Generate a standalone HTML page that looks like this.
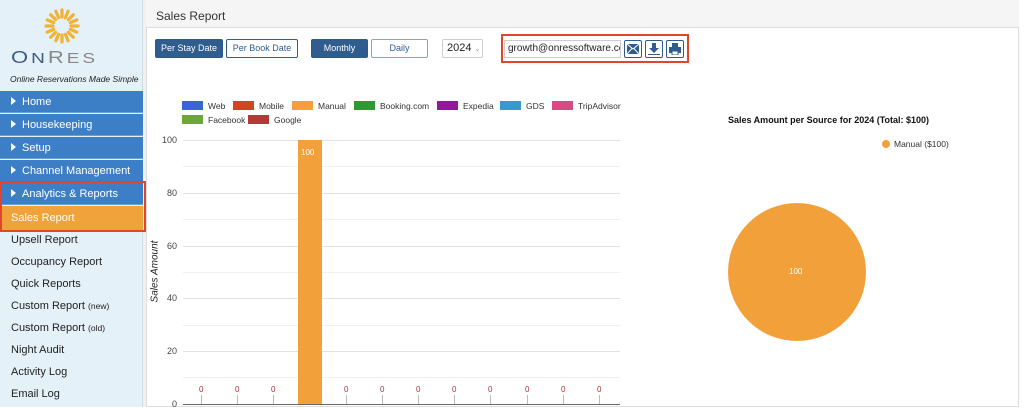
<!DOCTYPE html>
<html><head><meta charset="utf-8"><style>
*{box-sizing:border-box;margin:0;padding:0}
body{width:1024px;height:407px;overflow:hidden;background:#fff;font-family:"Liberation Sans",Arial,sans-serif;position:relative}
.sb{position:absolute;left:0;top:0;width:143px;height:407px;background:#e4f1f9;border-right:1px solid #cfdbe3}
.gap{position:absolute;left:143px;top:0;width:3px;height:407px;background:#eef2f5}
.nav{position:absolute;left:0;width:143px;height:22px;background:#3d7fc6;color:#fff;font-size:11px;line-height:22px;padding-left:11px;border-bottom:1px solid #6d9fd6}
.nav:before{content:"";display:inline-block;border-left:5px solid #fff;border-top:4px solid transparent;border-bottom:4px solid transparent;margin-right:6px;vertical-align:0}
.sub{position:absolute;left:11px;font-size:11px;color:#222}
.sub small{font-size:8.5px}
.panel{position:absolute;left:146px;top:0;width:873px;height:407px;border:1px solid #ddd;border-top:none}
.hd{position:absolute;left:146px;top:0;width:873px;height:28px;background:#f5f5f5;border-bottom:1px solid #ddd;font-size:12px;color:#333;padding:9px 0 0 10px}
.btn{position:absolute;top:39px;height:19px;font-size:9px;text-align:center;line-height:17px;border:1px solid #2d5a8a;border-radius:2px}
.dk{background:#2f5d8e;color:#fff}
.lt{background:#fff;color:#2f5d8e;border-color:#2f5d8e}
.ic{position:absolute;top:40px;width:18px;height:18px;border:1px solid #2f5d8e;border-radius:2px;background:#fff}
.lg{position:absolute;font-size:8.5px;color:#333;white-space:nowrap}
.lg b{display:inline-block;width:21px;height:9px;vertical-align:-1px;margin-right:5px}
.yl{position:absolute;font-size:9px;color:#444;text-align:right;width:20px;left:157px}
.gl{position:absolute;left:183px;width:437px;height:1px;background:#e2e2e2}
.z{position:absolute;top:385px;font-size:8px;color:#a33}
.tk{position:absolute;top:395px;width:1px;height:9px;background:#bbb}
</style></head><body>
<div class="sb"></div><div class="gap"></div>
<svg style="position:absolute;left:44px;top:8px" width="36" height="36" viewBox="-18 -18 36 36">
<g stroke="#f2b233" stroke-width="3.2" stroke-linecap="round" fill="none">
<line x1="0" y1="-16" x2="0" y2="-9"/><line x1="0" y1="16" x2="0" y2="9"/><line x1="-16" y1="0" x2="-9" y2="0"/><line x1="16" y1="0" x2="9" y2="0"/>
<line x1="11.3" y1="-11.3" x2="6.4" y2="-6.4"/><line x1="-11.3" y1="11.3" x2="-6.4" y2="6.4"/><line x1="-11.3" y1="-11.3" x2="-6.4" y2="-6.4"/><line x1="11.3" y1="11.3" x2="6.4" y2="6.4"/>
<line x1="6.1" y1="-14.8" x2="3.4" y2="-8.3"/><line x1="-6.1" y1="14.8" x2="-3.4" y2="8.3"/><line x1="-14.8" y1="-6.1" x2="-8.3" y2="-3.4"/><line x1="14.8" y1="6.1" x2="8.3" y2="3.4"/>
<line x1="-6.1" y1="-14.8" x2="-3.4" y2="-8.3"/><line x1="6.1" y1="14.8" x2="3.4" y2="8.3"/><line x1="-14.8" y1="6.1" x2="-8.3" y2="3.4"/><line x1="14.8" y1="-6.1" x2="8.3" y2="-3.4"/>
</g></svg>
<div style="position:absolute;left:11px;top:47px;font-size:22px;letter-spacing:3px;color:#3d5a80;transform:scaleY(.8);transform-origin:left top;white-space:nowrap">O<span style="font-size:19px">N</span><span style="color:#888">R<span style="font-size:19px">ES</span></span></div>
<div style="position:absolute;left:10px;top:74px;font-size:8.5px;font-style:italic;color:#222">Online Reservations Made Simple</div>
<div class="nav" style="top:91px">Home</div>
<div class="nav" style="top:114px">Housekeeping</div>
<div class="nav" style="top:137px">Setup</div>
<div class="nav" style="top:160px">Channel Management</div>
<div class="nav" style="top:183px">Analytics &amp; Reports</div>
<div style="position:absolute;left:0;top:206px;width:143px;height:24px;background:#f0a33a;color:#fff;font-size:11px;line-height:24px;padding-left:11px">Sales Report</div>
<div style="position:absolute;left:0;top:181px;width:146px;height:51px;border:2px solid #e0452e"></div>
<div class="sub" style="top:234px">Upsell Report</div>
<div class="sub" style="top:256px">Occupancy Report</div>
<div class="sub" style="top:278px">Quick Reports</div>
<div class="sub" style="top:300px">Custom Report <small>(new)</small></div>
<div class="sub" style="top:322px">Custom Report <small>(old)</small></div>
<div class="sub" style="top:344px">Night Audit</div>
<div class="sub" style="top:366px">Activity Log</div>
<div class="sub" style="top:388px">Email Log</div>

<div class="panel"></div>
<div class="hd">Sales Report</div>
<div class="btn dk" style="left:155px;width:68px">Per Stay Date</div>
<div class="btn lt" style="left:226px;width:72px">Per Book Date</div>
<div class="btn dk" style="left:311px;width:57px">Monthly</div>
<div class="btn lt" style="left:371px;width:57px;border-color:#8aa">Daily</div>
<div style="position:absolute;left:442px;top:39px;width:41px;height:19px;border:1px solid #ccc;border-radius:2px;font-size:11px;line-height:17px;padding-left:4px;color:#222">2024 <span style="font-size:7px;color:#888">&#8964;</span></div>
<div style="position:absolute;left:501px;top:34px;width:188px;height:29px;border:2px solid #e0452e"></div>
<div style="position:absolute;left:504px;top:40px;width:117px;height:18px;border:1px solid #ccc;font-size:10px;line-height:16px;padding-left:3px;overflow:hidden;white-space:nowrap;color:#222">growth@onressoftware.com</div>
<div class="ic" style="left:624px"><svg style="position:absolute;left:2px;top:3px" width="12" height="10"><rect width="12" height="10" fill="#2f5d8e"/><path d="M0 0L6 5L12 0M0 10L5 4.5M12 10L7 4.5" stroke="#fff" fill="none"/></svg></div>
<div class="ic" style="left:645px"><svg style="position:absolute;left:2px;top:2px" width="12" height="12"><path d="M4 0h4v5h3L6 10L1 5h3z" fill="#2f5d8e"/><rect y="11" width="12" height="1.5" fill="#2f5d8e"/></svg></div>
<div class="ic" style="left:666px"><svg style="position:absolute;left:2px;top:2px" width="12" height="12"><rect x="3" y="0" width="6" height="4" fill="#2f5d8e"/><rect x="0" y="4" width="12" height="6" fill="#2f5d8e"/><rect x="3" y="8" width="6" height="4" fill="#fff" stroke="#2f5d8e"/></svg></div>

<div class="lg" style="left:182px;top:101px"><b style="background:#3b64d4"></b>Web</div>
<div class="lg" style="left:233px;top:101px"><b style="background:#d04625"></b>Mobile</div>
<div class="lg" style="left:292px;top:101px"><b style="background:#f2a13a"></b>Manual</div>
<div class="lg" style="left:354px;top:101px"><b style="background:#2f9733"></b>Booking.com</div>
<div class="lg" style="left:437px;top:101px"><b style="background:#8d1b98"></b>Expedia</div>
<div class="lg" style="left:500px;top:101px"><b style="background:#3d98c9"></b>GDS</div>
<div class="lg" style="left:552px;top:101px"><b style="background:#d74b82"></b>TripAdvisor</div>
<div class="lg" style="left:182px;top:115px"><b style="background:#6da735"></b>Facebook</div>
<div class="lg" style="left:248px;top:115px"><b style="background:#b13a37"></b>Google</div>

<div class="gl" style="top:140px"></div><div class="gl" style="top:166px;background:#f0f0f0"></div>
<div class="gl" style="top:193px"></div><div class="gl" style="top:219px;background:#f0f0f0"></div>
<div class="gl" style="top:246px"></div><div class="gl" style="top:272px;background:#f0f0f0"></div>
<div class="gl" style="top:298px"></div><div class="gl" style="top:325px;background:#f0f0f0"></div>
<div class="gl" style="top:351px"></div><div class="gl" style="top:377px;background:#f0f0f0"></div>
<div class="gl" style="top:404px;background:#666"></div>
<div class="yl" style="top:135px">100</div><div class="yl" style="top:188px">80</div><div class="yl" style="top:241px">60</div><div class="yl" style="top:293px">40</div><div class="yl" style="top:346px">20</div><div class="yl" style="top:399px">0</div>
<div style="position:absolute;left:120px;top:266px;width:70px;font-size:10px;font-style:italic;color:#222;transform:rotate(-90deg);text-align:center">Sales Amount</div>
<div style="position:absolute;left:298px;top:140px;width:24px;height:264px;background:#f2a13a"></div>
<div style="position:absolute;left:301px;top:148px;font-size:8px;color:#fff">100</div>
<div class="z" style="left:199px">0</div><div class="z" style="left:235px">0</div><div class="z" style="left:271px">0</div>
<div class="z" style="left:344px">0</div><div class="z" style="left:380px">0</div><div class="z" style="left:416px">0</div><div class="z" style="left:452px">0</div><div class="z" style="left:488px">0</div><div class="z" style="left:525px">0</div><div class="z" style="left:561px">0</div><div class="z" style="left:597px">0</div>
<div class="tk" style="left:201px"></div><div class="tk" style="left:237px"></div><div class="tk" style="left:273px"></div><div class="tk" style="left:346px"></div><div class="tk" style="left:382px"></div><div class="tk" style="left:418px"></div><div class="tk" style="left:454px"></div><div class="tk" style="left:490px"></div><div class="tk" style="left:527px"></div><div class="tk" style="left:563px"></div><div class="tk" style="left:599px"></div>

<div style="position:absolute;left:728px;top:115px;font-size:9px;font-weight:bold;color:#111">Sales Amount per Source for 2024 (Total: $100)</div>
<div style="position:absolute;left:882px;top:139px;font-size:8.5px;color:#333"><span style="display:inline-block;width:8px;height:8px;border-radius:50%;background:#f2a13a;vertical-align:-1px;margin-right:4px"></span>Manual ($100)</div>
<div style="position:absolute;left:728px;top:203px;width:138px;height:138px;border-radius:50%;background:#f2a13a"></div>
<div style="position:absolute;left:789px;top:267px;font-size:8px;color:#fff">100</div>
</body></html>
